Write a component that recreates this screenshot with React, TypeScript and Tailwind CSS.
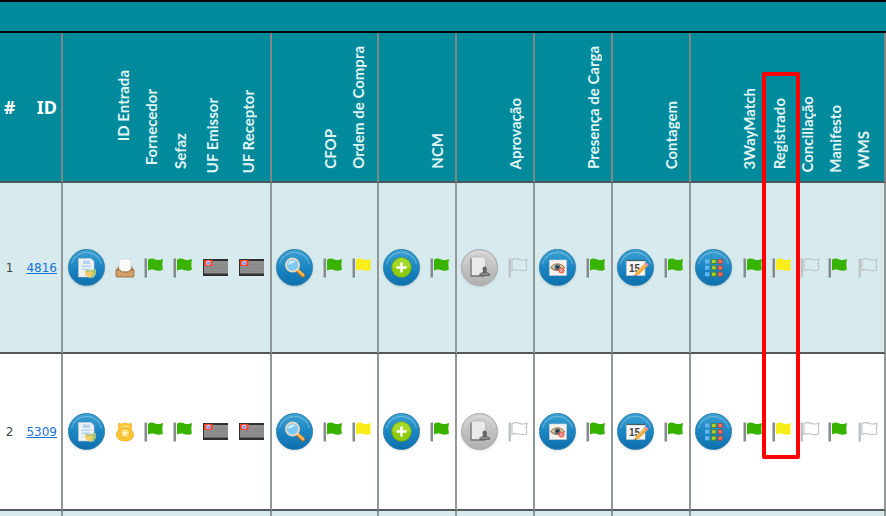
import type { ReactNode } from 'react';
import clsx from 'clsx';

type FlagColor = 'green' | 'yellow' | 'empty';
type ActionName = 'document' | 'search' | 'add' | 'stamp' | 'view' | 'calendar' | 'grid';

interface Column {
  label: string;
  width: string;
  pad?: string;
  action?: ActionName;
  flag?: FlagColor;
  state?: boolean;
  entry?: boolean;
  last?: boolean;
}

const columns: Column[] = [
  { label: 'Documento', width: 'w-[50px]', action: 'document' },
  { label: 'ID Entrada', width: 'w-[26px]', pad: 'pb-10', entry: true },
  { label: 'Fornecedor', width: 'w-[31px]', pad: 'pb-4 pl-0.5', flag: 'green' },
  { label: 'Sefaz', width: 'w-[28px]', pad: 'pb-3', flag: 'green' },
  { label: 'UF Emissor', width: 'w-[36px]', pad: 'pb-2 pl-1', state: true },
  { label: 'UF Receptor', width: 'w-[38px]', pad: 'pb-2 pl-1', state: true, last: true },
  { label: 'Pesquisar', width: 'w-[48px]', action: 'search' },
  { label: 'CFOP', width: 'w-[28px]', pad: 'pb-3', flag: 'green' },
  { label: 'Ordem de Compra', width: 'w-[31px]', pad: 'pb-3', flag: 'yellow', last: true },
  { label: 'Adicionar', width: 'w-[48px]', action: 'add' },
  { label: 'NCM', width: 'w-[30px]', pad: 'pb-3', flag: 'green', last: true },
  { label: 'Aprovar', width: 'w-[48px]', action: 'stamp' },
  { label: 'Aprovação', width: 'w-[30px]', pad: 'pb-3', flag: 'empty', last: true },
  { label: 'Visualizar', width: 'w-[48px]', action: 'view' },
  { label: 'Presença de Carga', width: 'w-[30px]', pad: 'pb-3', flag: 'green', last: true },
  { label: 'Agendar', width: 'w-[48px]', action: 'calendar' },
  { label: 'Contagem', width: 'w-[30px]', pad: 'pb-3', flag: 'green', last: true },
  { label: 'Comparar', width: 'w-[48px]', action: 'grid' },
  { label: '3WayMatch', width: 'w-[30px]', pad: 'pb-3', flag: 'green' },
  { label: 'Registrado', width: 'w-[28px]', pad: 'pb-3', flag: 'yellow' },
  { label: 'Conciliação', width: 'w-[28px]', pad: 'pb-2', flag: 'empty' },
  { label: 'Manifesto', width: 'w-[28px]', pad: 'pb-2', flag: 'green' },
  { label: 'WMS', width: 'w-[33px]', pad: 'pb-3', flag: 'empty', last: true },
];

const rows = [
  { id: '4816', entry: 'inbox', className: 'h-[171px] bg-[#d7eaed]' },
  { id: '5309', entry: 'badge', className: 'h-[157px] bg-white' },
];

function Flag({ color }: { color: FlagColor }) {
  const empty = color === 'empty';
  return (
    <svg viewBox="0 0 20 20" className="mx-auto block h-5 w-5 max-w-none">
      <path d="M0.5 0.5h2.500v19H0.5z" fill={empty ? '#bfc5c6' : '#858a8a'} />
      <path
        d="M4 1.800c2-1.600 4.500-1.600 7.300-.4 2.600 1 4.700.9 7.700-.3l-.7 5 .5 5.700c-2.800 1.300-5.200 1.200-8 .2-2.500-.8-4.600-.6-6.800.4z"
        fill={color === 'green' ? '#37b300' : color === 'yellow' ? '#f8ed18' : 'none'}
        stroke={empty ? '#c0c6c7' : 'none'}
        strokeWidth="1.2"
      />
    </svg>
  );
}

function StateFlag() {
  return (
    <svg viewBox="0 0 25 17" className="mx-auto block h-[17px] w-[25px] max-w-none">
      <path d="M0 0h25v17H0z" fill="#8f8f8f" />
      <path d="M1 6h24M1 9h24M1 12h24" stroke="#808080" strokeWidth="0.6" />
      <path d="M0 0h25v2H0zM0 14.500h25V17H0zM0 0h1v17H0z" fill="#2f2f2f" />
      <path d="M1 1h8.500v6H1z" fill="#f4492f" />
      <circle cx="5.300" cy="4" r="2.300" fill="#d5d3fa" />
      <path d="M4.200 3h2.200l.7 1.200-1.600 1.800-1.500-1z" fill="#7d93f2" />
    </svg>
  );
}

function InboxIcon() {
  return (
    <svg viewBox="0 0 20 20" className="mx-auto block h-5 w-5 max-w-none">
      <path d="M3.500 8h13l2.500 4v6.500H1V12z" fill="#a9794a" />
      <path d="M4 1.500h2L7.500.5l1 1 1.500-1 1.500 1 1-1 1.500 1h2V11l-2 2.500H6L4 11z" fill="#fbfbfb" stroke="#c9cccc" strokeWidth="0.6" />
      <path d="M1 12h4l1.500 2h7l1.500-2h4v6a1 1 0 0 1-1 1H2a1 1 0 0 1-1-1z" fill="#d2a26a" stroke="#966437" strokeWidth="0.8" />
    </svg>
  );
}

function BadgeIcon() {
  return (
    <svg viewBox="0 0 20 20" className="mx-auto block h-5 w-5 max-w-none">
      <path
        d="M4 1.200l2.500 1L10 1l3.500 1.200 2.500-1 .8 3-.8 2.300c.4 1.800 2.500 3.600 2.500 6.500 0 4-4 6-8.500 6s-8.500-2-8.500-6c0-2.900 2.100-4.700 2.500-6.500L3.200 4.200z"
        fill="#fbc534"
        stroke="#f0a92b"
        strokeWidth="0.8"
      />
      <circle cx="10" cy="11" r="4.700" fill="#fddb68" stroke="#efa82a" strokeWidth="0.8" />
      <path d="M10 7.500l1 2.300 2.500.2-1.900 1.600.6 2.500-2.200-1.300-2.200 1.300.6-2.500L6.500 10l2.500-.2z" fill="#fff3b5" />
      <path d="M6 4.500h8" stroke="#ffe588" strokeWidth="1.300" />
    </svg>
  );
}

const glyphs: Record<ActionName, ReactNode> = {
  document: (
    <>
      <path d="M10.500 9.500h12.500l3 3v15.500H10.500z" fill="#eef1f2" stroke="#c6cdd0" strokeWidth="0.6" />
      <path d="M15 11.500h7v3.500h-7zM13.500 16.500h10V18h-10zM13.500 19.500h9V21h-9z" fill="#b5d4f4" />
      <path d="M17.500 20.500l4 1 6.500-1.500v5.500l-4.500 3.500-4-2z" fill="#9fc477" />
      <path d="M16.500 22l4 1 3-1 2 2.500-3.500 4.500-4-2.500z" fill="#f0cf65" />
    </>
  ),
  search: (
    <>
      <path d="M20.500 20.500l6.500 6" stroke="#b96a20" strokeWidth="4.200" strokeLinecap="round" />
      <path d="M21 20.500l6 5.500" stroke="#f8b955" strokeWidth="2.700" strokeLinecap="round" />
      <circle cx="16.500" cy="16" r="6.500" fill="#7cc8f5" stroke="#e5d8c2" strokeWidth="2" />
      <path d="M12 16a4.500 4.500 0 0 1 7.500-3.200z" fill="#d2efff" />
    </>
  ),
  add: (
    <>
      <circle cx="18.500" cy="18.500" r="9.800" fill="#8fca0c" stroke="#69a70b" strokeWidth="0.8" />
      <path d="M9.500 18a9 9 0 0 1 18 0c-5 2-13 2-18 0z" fill="#a6d828" />
      <path d="M18.500 13.500v10M13.500 18.500h10" stroke="#fff" strokeWidth="2.500" />
    </>
  ),
  stamp: (
    <>
      <path d="M10 8h12l2.500 2.500V27H10z" fill="#e9e9e9" stroke="#b0b0b0" strokeWidth="0.6" />
      <path d="M10 9.500V27h14" fill="none" stroke="#777" strokeWidth="1.300" />
      <path d="M23.500 17.500a2.500 2.500 0 0 1 2 4l.3 1.500 3 1.500V27H18.500v-2.500l3.300-1.500.2-1.500a2.500 2.500 0 0 1 1.500-4z" fill="#666" />
      <path d="M19.500 25h8" stroke="#aaa" />
    </>
  ),
  view: (
    <>
      <path d="M10.500 11h17v15.500h-17z" fill="#f5f3f0" stroke="#d0d0d0" strokeWidth="0.6" />
      <path d="M12 18.500c3-5 9.500-5 13.500 0-3.500 4-10 4-13.500 0z" fill="#f2d4a8" stroke="#a38658" strokeWidth="1.200" />
      <circle cx="18.500" cy="18.300" r="3" fill="#526c76" />
      <circle cx="18.500" cy="18" r="1.200" fill="#17252b" />
      <circle cx="22.500" cy="21.500" r="3" fill="#f16357" />
      <path d="M21.300 20.300l2.400 2.400m0-2.400l-2.400 2.400" stroke="#fff" strokeWidth="0.9" />
    </>
  ),
  calendar: (
    <>
      <path d="M9.500 11.500H28v15H9.500z" fill="#f8f8f8" stroke="#c9ced0" strokeWidth="0.6" />
      <path d="M9.500 11.500H28" stroke="#435a66" strokeWidth="1.200" />
      <text x="12" y="23" fontSize="10" fontWeight="700" fontFamily="Liberation Sans, sans-serif" fill="#444">
        15
      </text>
      <path d="M17.500 27l1.500-4 8.500-8.500 3 2.800-8.500 8.200z" fill="#f1a63d" />
      <path d="M20 23.500l8.500-8" stroke="#ffd98a" />
      <path d="M27 14.800l1.700-1.600 3 2.700-1.600 1.700z" fill="#e993a2" />
      <path d="M17.500 27l.6-1.600 1 1z" fill="#333" />
    </>
  ),
  grid: (
    <>
      <path d="M10 10.500h4.500v4H10zM10 16.800h4.500v4H10zM10 23.200h4.500v4H10z" fill="#61b5f2" />
      <path d="M16.500 10.500H21v4h-4.500zM16.500 16.800H21v4h-4.500zM16.500 23.200H21v4h-4.500z" fill="#a8d52a" stroke="#4f7d1b" strokeWidth="0.8" />
      <path d="M23 10.500h4.500v4H23zM23 16.800h4.500v4H23zM23 23.200h4.500v4H23z" fill="#f2705c" stroke="#9c443d" strokeWidth="0.8" />
    </>
  ),
};

function ActionButton({ name, label }: { name: ActionName; label: string }) {
  const gray = name === 'stamp';
  return (
    <button
      type="button"
      aria-label={label}
      className={clsx(
        'mx-auto block h-[37px] w-[37px] rounded-full border shadow-sm',
        gray
          ? 'border-[#a9a9a9] bg-linear-to-b from-[#d2d2d2] to-[#b0b0b0]'
          : 'border-[#2b7fae] bg-linear-to-b from-[#3aa0d3] via-[#1b86c3] to-[#0e70ad]'
      )}
    >
      <svg viewBox="1 1 35 35" className="block h-[35px] w-[35px] max-w-none">
        <path d="M3.500 15a15.500 15.500 0 0 1 30 0" fill="none" stroke="#fff" strokeOpacity="0.250" strokeWidth="1.200" />
        {glyphs[name]}
      </svg>
    </button>
  );
}

export default function App() {
  return (
    <main className="relative min-h-screen w-full overflow-hidden bg-[#d7eaed]">
      <table className="w-full table-fixed border-separate border-spacing-0">
        <colgroup>
          <col className="w-[19px]" />
          <col className="w-[44px]" />
          {columns.map((col) => (
            <col key={col.label} className={col.width} />
          ))}
          <col className="w-[1px]" />
        </colgroup>
        <thead className="bg-[#008a9b] text-white">
          <tr className="h-[33px]">
            <td colSpan={26} className="border-t-2 border-b-2 border-black p-0" />
          </tr>
          <tr className="h-[150px] font-['Noto_Sans',sans-serif] text-lg">
            <th className="border-b-2 border-[#4a5c60] p-0">#</th>
            <th className="border-r-2 border-b-2 border-r-[#808686] border-b-[#4a5c60] p-0 pr-1 text-right">ID</th>
            {columns.map((col) => (
              <th
                key={col.label}
                aria-label={col.label}
                className={clsx(
                  'border-b-2 border-b-[#4a5c60] p-0 align-bottom',
                  col.pad,
                  col.last && 'border-r-2 border-r-[#808686]'
                )}
              >
                {!col.action && (
                  <span className="mx-auto block w-5 rotate-180 font-[Lato,sans-serif] text-[15px] leading-5 font-bold whitespace-nowrap text-[#e3f4f5] [writing-mode:vertical-rl]">
                    {col.label}
                  </span>
                )}
              </th>
            ))}
            <td className="border-b-2 border-[#4a5c60] p-0" />
          </tr>
        </thead>
        <tbody className="text-center font-['DejaVu_Sans',sans-serif] text-xs">
          {rows.map((row, i) => (
            <tr key={row.id} className={row.className}>
              <td className="border-b-2 border-[#555b5c] p-0 text-[#444]">{i + 1}</td>
              <td className="border-r-2 border-b-2 border-r-[#929797] border-b-[#555b5c] p-0 pr-1 text-right">
                <a href={`#${row.id}`} className="text-[#1673d8] underline">
                  {row.id}
                </a>
              </td>
              {columns.map((col) => (
                <td
                  key={col.label}
                  className={clsx(
                    'border-b-2 border-b-[#555b5c] p-0 align-middle',
                    col.action ? 'pr-1' : 'pr-0.5',
                    col.last && 'border-r-2 border-r-[#929797]'
                  )}
                >
                  {col.action && <ActionButton name={col.action} label={col.label} />}
                  {col.entry && (row.entry === 'inbox' ? <InboxIcon /> : <BadgeIcon />)}
                  {col.flag && <Flag color={col.flag} />}
                  {col.state && <StateFlag />}
                </td>
              ))}
              <td className="border-b-2 border-[#555b5c] p-0" />
            </tr>
          ))}
          {/* próxima linha */}
          <tr className="h-[5px]">
            <td className="p-0" />
            <td className="border-r-2 border-[#929797] p-0" />
            {columns.map((col) => (
              <td key={col.label} className={clsx('p-0', col.last && 'border-r-2 border-[#929797]')} />
            ))}
            <td className="p-0" />
          </tr>
        </tbody>
      </table>
      {/* destaque da coluna Registrado */}
      <div className="pointer-events-none absolute top-[72px] right-[86px] h-[387px] w-[38px] rounded-xs border-4 border-[#ff0000]" />
    </main>
  );
}
